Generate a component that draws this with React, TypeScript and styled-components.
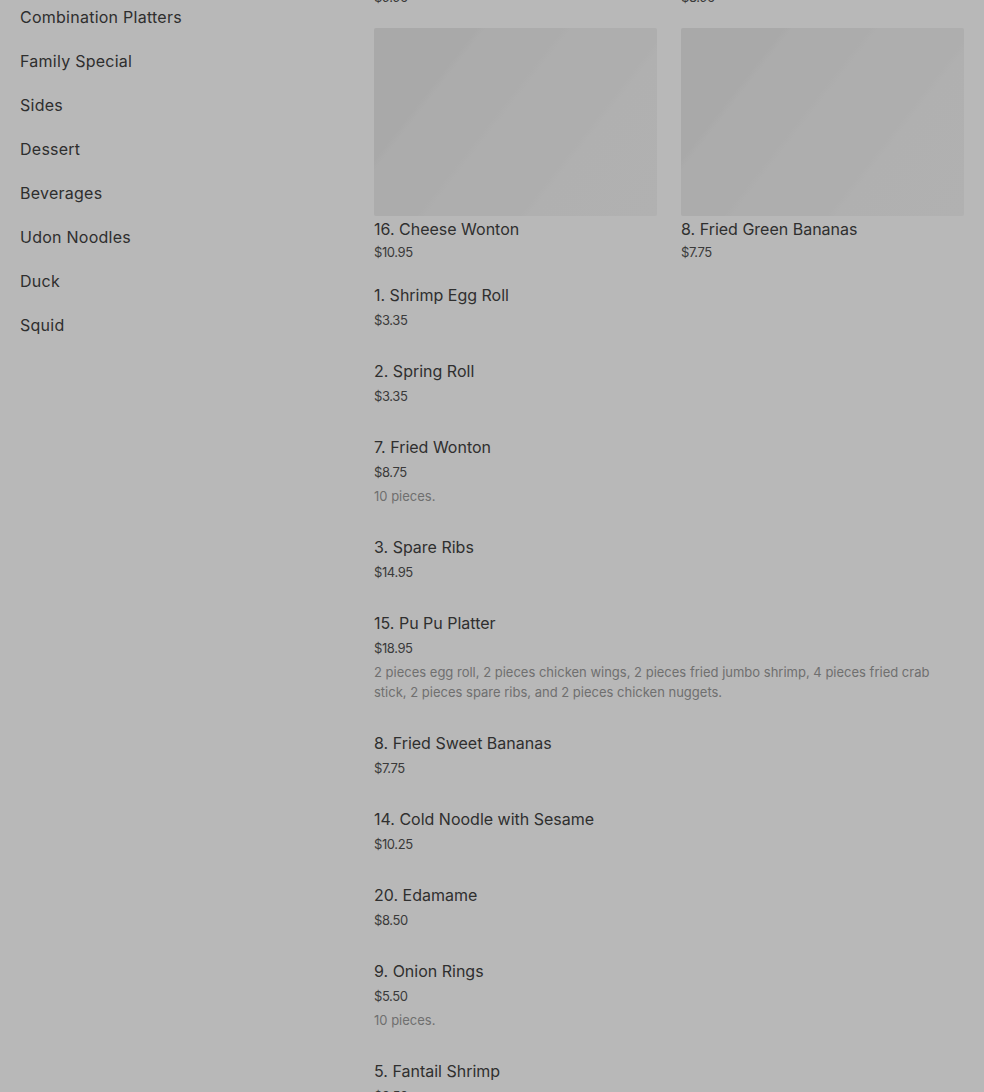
import styled, { createGlobalStyle } from 'styled-components';

type MenuItem = {
  id: string;
  name: string;
  price: string;
  description?: string;
};

const categories = [
  'Combination Platters',
  'Family Special',
  'Sides',
  'Dessert',
  'Beverages',
  'Udon Noodles',
  'Duck',
  'Squid',
];

// first row sits above the fold, only its prices peek in at the top
const featured: MenuItem[] = [
  { id: 'f1', name: '6. Chicken Wings', price: '$9.95' },
  { id: 'f2', name: '10. Crab Rangoon', price: '$8.95' },
  { id: 'f3', name: '16. Cheese Wonton', price: '$10.95' },
  { id: 'f4', name: '8. Fried Green Bananas', price: '$7.75' },
];

const items: MenuItem[] = [
  { id: 'a', name: '1. Shrimp Egg Roll', price: '$3.35' },
  { id: 'b', name: '2. Spring Roll', price: '$3.35' },
  { id: 'c', name: '7. Fried Wonton', price: '$8.75', description: '10 pieces.' },
  { id: 'd', name: '3. Spare Ribs', price: '$14.95' },
  {
    id: 'e',
    name: '15. Pu Pu Platter',
    price: '$18.95',
    description:
      '2 pieces egg roll, 2 pieces chicken wings, 2 pieces fried jumbo shrimp, 4 pieces fried crab stick, 2 pieces spare ribs, and 2 pieces chicken nuggets.',
  },
  { id: 'f', name: '8. Fried Sweet Bananas', price: '$7.75' },
  { id: 'g', name: '14. Cold Noodle with Sesame', price: '$10.25' },
  { id: 'h', name: '20. Edamame', price: '$8.50' },
  { id: 'i', name: '9. Onion Rings', price: '$5.50', description: '10 pieces.' },
  { id: 'j', name: '5. Fantail Shrimp', price: '$9.50' },
];

const App = () => {
  return (
    <>
      <GlobalStyle />
      <Page>
        <Sidebar>
          {categories.map((c) => (
            <CategoryLink key={c}>{c}</CategoryLink>
          ))}
        </Sidebar>
        <Main>
          <CardGrid>
            {featured.map((item) => (
              <Card key={item.id}>
                <Placeholder />
                <ItemName>{item.name}</ItemName>
                <Price $card>{item.price}</Price>
              </Card>
            ))}
          </CardGrid>
          <ItemList>
            {items.map((item) => (
              <ListItem key={item.id}>
                <ItemName>{item.name}</ItemName>
                <Price>{item.price}</Price>
                {item.description && (
                  <Description>{item.description}</Description>
                )}
              </ListItem>
            ))}
          </ItemList>
        </Main>
      </Page>
    </>
  );
};

export default App;

const GlobalStyle = createGlobalStyle`
  html, body {
    margin: 0;
    padding: 0;
    background: #b8b8b8;
    font-family: Inter, "Liberation Sans", sans-serif;
    color: #2f2f2f;
    overflow: hidden;
  }
`;

const Page = styled.div`
  display: flex;
  flex-direction: row;
  align-items: flex-start;
  height: 1092px;
  overflow: hidden;
`;

const Sidebar = styled.nav`
  width: 374px;
  flex-shrink: 0;
  display: flex;
  flex-direction: column;
  gap: 20px;
  padding: 5px 0 0 20px;
  box-sizing: border-box;
`;

const CategoryLink = styled.div`
  font-size: 16px;
  line-height: 24px;
  letter-spacing: 0.25px;
  color: #2e2e2e;
`;

const Main = styled.main`
  width: 590px;
  margin-top: -227px;
  display: flex;
  flex-direction: column;
`;

const CardGrid = styled.div`
  display: grid;
  grid-template-columns: 1fr 1fr;
  column-gap: 24px;
  row-gap: 21px;
`;

const Card = styled.div`
  display: flex;
  flex-direction: column;
`;

const Placeholder = styled.div`
  height: 188px;
  margin-bottom: 1px;
  border-radius: 2px;
  background-color: #ababab;
  background-image: linear-gradient(
    128deg,
    #a9a9a9 0%,
    #a9a9a9 24%,
    #acacac 26%,
    #acacac 44%,
    #aeaeae 46%,
    #aeaeae 68%,
    #b0b0b0 70%,
    #b1b1b1 100%
  );
`;

const ItemName = styled.div`
  font-size: 16px;
  line-height: 24px;
  color: #2f2f2f;
`;

const Price = styled.div<{ $card?: boolean }>`
  font-size: 13px;
  line-height: 20px;
  color: #3a3a3a;
  letter-spacing: -0.4px;
  margin-top: ${(p) => (p.$card ? '1px' : '0')};
`;

const ItemList = styled.div`
  display: flex;
  flex-direction: column;
  gap: 29px;
  margin-top: 21px;
`;

const ListItem = styled.div`
  display: flex;
  flex-direction: column;
  gap: 3px;
`;

const Description = styled.div`
  font-size: 13px;
  line-height: 20px;
  color: #6f6f6f;
  margin-top: 1px;
`;
